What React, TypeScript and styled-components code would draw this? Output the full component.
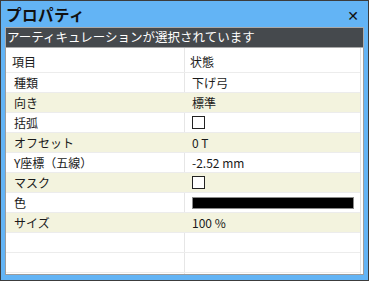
import { Fragment, ReactNode } from 'react';
import styled, { createGlobalStyle } from 'styled-components';

const Global = createGlobalStyle`
	body {
		margin: 0;
		font-family: "Noto Sans CJK JP", "Noto Sans", sans-serif;
	}
`

const Window = styled.div`
	width: 369px;
	height: 281px;
	box-sizing: border-box;
	border: 1px solid #3c3c3c;
	background: #63b4f5;
	padding: 0 4px 5px 4px;
	display: flex;
	flex-direction: column;
`

const TitleBar = styled.div`
	height: 26px;
	display: flex;
	align-items: center;
	justify-content: space-between;
	padding: 0 5px 0 1px;
`

const Title = styled.div`
	font-size: 15.5px;
	font-weight: bold;
	color: #111;
	letter-spacing: 0.5px;
`

const Close = styled.div`
	font-family: "DejaVu Sans", sans-serif;
	font-size: 14px;
	font-weight: bold;
	color: #111;
	margin-top: 4px;
`

const Status = styled.div`
	height: 21px;
	box-sizing: border-box;
	background: #45494d;
	border: 1px solid #a9a9a9;
	color: #fff;
	font-size: 12.5px;
	line-height: 18px;
	padding-left: 1px;
	white-space: nowrap;
`

const Panel = styled.div`
	flex: 1;
	background: #fff;
	border: 1px solid #9c9c9c;
	border-top: none;
	padding-right: 2px;
	display: flex;
`

const Grid = styled.div`
	flex: 1;
	border-right: 1px solid #e4e4e4;
	display: grid;
	grid-template-columns: 178px 1fr;
	grid-auto-rows: 20px;
	grid-template-rows: 25px;
	background: linear-gradient(#e6e6e6, #e6e6e6) 178px 0 / 1px 100% no-repeat;
`

const Cell = styled.div<{ $alt?: boolean; $head?: boolean }>`
	box-sizing: border-box;
	border-bottom: 1px solid #ececec;
	background: ${props => props.$alt ? '#f3f3de' : 'transparent'};
	padding-left: ${props => props.$head ? '6px' : '8px'};
	padding-top: ${props => props.$head ? '3px' : '0'};
	font-size: 12px;
	color: #1a1a1a;
	display: flex;
	align-items: center;
	white-space: nowrap;
`

const Check = styled.div`
	width: 11px;
	height: 11px;
	border: 1px solid #222;
	background: #fff;
`

const Swatch = styled.div`
	width: 160px;
	height: 10px;
	border: 1px solid #8a8a8a;
	background: #000;
`

const rows: { name: string; value: ReactNode }[] = [
	{ name: '種類', value: '下げ弓' },
	{ name: '向き', value: '標準' },
	{ name: '括弧', value: <Check /> },
	{ name: 'オフセット', value: '0 T' },
	{ name: 'Y座標（五線）', value: '-2.52 mm' },
	{ name: 'マスク', value: <Check /> },
	{ name: '色', value: <Swatch /> },
	{ name: 'サイズ', value: '100 %' },
	{ name: '', value: '' },
	{ name: '', value: '' },
]

const App = () => {
	return (
		<Window>
			<Global />
			<TitleBar>
				<Title>プロパティ</Title>
				<Close>✕</Close>
			</TitleBar>
			<Status>アーティキュレーションが選択されています</Status>
			<Panel>
				<Grid>
					<Cell $head>項目</Cell>
					<Cell $head>状態</Cell>
					{rows.map((r, i) => (
						<Fragment key={i}>
							<Cell $alt={i % 2 === 1 && r.name !== ''}>{r.name}</Cell>
							<Cell $alt={i % 2 === 1 && r.name !== ''}>{r.value}</Cell>
						</Fragment>
					))}
				</Grid>
			</Panel>
		</Window>
	)
}

export default App
